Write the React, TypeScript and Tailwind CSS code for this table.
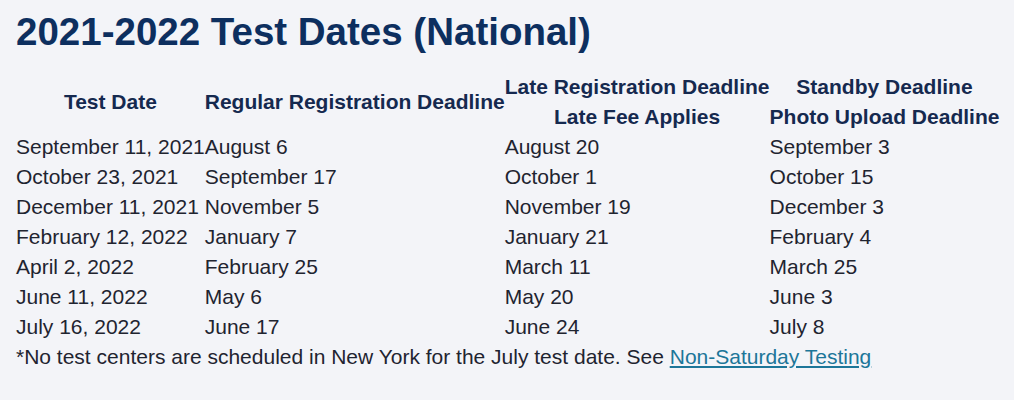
import React from "react";

const rows = [
  ["September 11, 2021", "August 6", "August 20", "September 3"],
  ["October 23, 2021", "September 17", "October 1", "October 15"],
  ["December 11, 2021", "November 5", "November 19", "December 3"],
  ["February 12, 2022", "January 7", "January 21", "February 4"],
  ["April 2, 2022", "February 25", "March 11", "March 25"],
  ["June 11, 2022", "May 6", "May 20", "June 3"],
  ["July 16, 2022", "June 17", "June 24", "July 8"],
];

export default function App() {
  return (
    <div
      className="min-h-[400px] w-full bg-[#f3f4f8] px-[16px] pt-[9px] text-[#1f2430]"
      style={{ fontFamily: '"Liberation Sans", Arial, sans-serif' }}
    >
      <h1 className="mb-[17px] text-[38.5px] font-bold leading-[46px] text-[#0d2f5f]">
        2021-2022 Test Dates (National)
      </h1>
      <table className="table-fixed border-collapse text-[21px] leading-[30px]">
        <colgroup>
          <col className="w-[189px]" />
          <col className="w-[300px]" />
          <col className="w-[265px]" />
          <col className="w-[229px]" />
        </colgroup>
        <thead>
          <tr className="text-[#15294f]">
            <th className="p-0 text-center align-middle font-bold whitespace-nowrap">Test Date</th>
            <th className="p-0 text-left align-middle font-bold whitespace-nowrap">Regular Registration Deadline</th>
            <th className="p-0 text-center align-middle font-bold whitespace-nowrap">
              Late Registration Deadline
              <br />
              Late Fee Applies
            </th>
            <th className="p-0 text-center align-middle font-bold whitespace-nowrap">
              Standby Deadline
              <br />
              Photo Upload Deadline
            </th>
          </tr>
        </thead>
        <tbody>
          {rows.map((r) => (
            <tr key={r[0]}>
              {r.map((c, i) => (
                <td key={i} className="p-0 whitespace-nowrap">
                  {c}
                </td>
              ))}
            </tr>
          ))}
        </tbody>
      </table>
      <p className="text-[21px] leading-[30px]">
        *No test centers are scheduled in New York for the July test date. See{" "}
        <a href="#" className="text-[#1c7699] underline">
          Non-Saturday Testing
        </a>
      </p>
    </div>
  );
}
